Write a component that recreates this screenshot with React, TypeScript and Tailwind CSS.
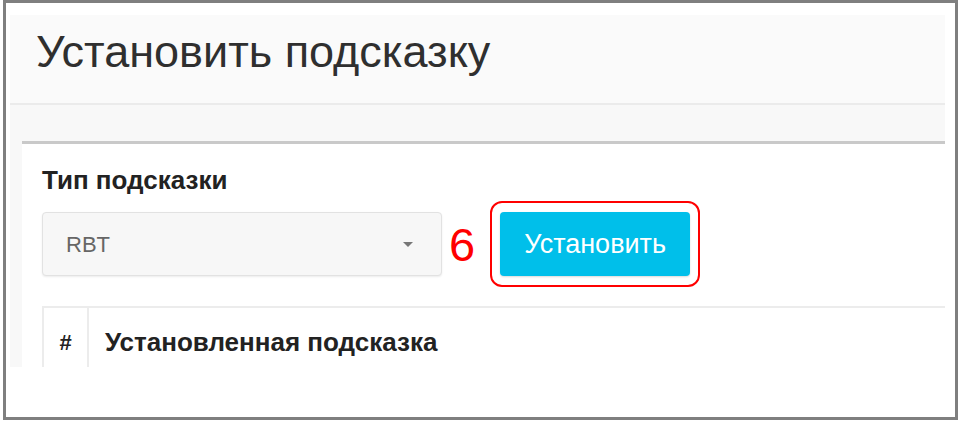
import React from "react";

export default function App() {
  return (
    <div className="w-[958px] h-[421px] bg-white font-['Liberation_Sans',Arial,sans-serif]">
      <div className="ml-[3px] w-[955px] h-[420px] border-[3px] border-[#7f7f7f] bg-white overflow-hidden">
        <div className="ml-[4px] mt-[12px] w-[935px] h-[352px] bg-[#f8f8f8] overflow-hidden flex flex-col">
          <div className="h-[90px] bg-[#fafafa] border-b-2 border-[#ebebeb] pl-[26px] pt-[11px] shrink-0">
            <h1 className="text-[45px] leading-[52px] text-[#2f2f2f]">Установить подсказку</h1>
          </div>

          <div className="pl-[12px] pt-[36px] flex-1 flex">
            <div className="flex-1 bg-white border-t-[3px] border-[#c9c9c9] pl-[20px] pt-[21px]">
              <label className="block text-[26px] leading-[30px] font-bold text-[#222]">Тип подсказки</label>

              <div className="mt-[6px] flex items-center">
                <div className="w-[400px] h-[64px] rounded-[4px] bg-[#f7f7f7] border border-[#e2e2e2] shadow-[0_1px_2px_rgba(0,0,0,0.08)] flex items-center justify-between pl-[23px] pr-[28px]">
                  <span className="text-[22px] text-[#666]">RBT</span>
                  <span className="w-0 h-0 border-l-[5px] border-r-[5px] border-t-[5px] border-l-transparent border-r-transparent border-t-[#777]" />
                </div>

                <span className="ml-[7px] text-[47px] leading-none text-[#ff0000]">6</span>

                <div className="ml-[15px] px-[8px] py-[9px] rounded-[12px] border-2 border-[#ff0000]">
                  <button className="w-[190px] h-[64px] rounded-[4px] bg-[#00bfea] text-white text-[27px] shadow-[0_1px_2px_rgba(0,0,0,0.15)]">
                    Установить
                  </button>
                </div>
              </div>

              <table className="mt-[19px] w-full border-collapse">
                <thead>
                  <tr className="border-t-2 border-[#ececec]">
                    <th className="w-[45px] h-[70px] border-l-2 border-r-2 border-[#ececec] text-[22px] font-bold text-[#222] text-center align-middle">
                      #
                    </th>
                    <th className="pl-[16px] text-left text-[26px] font-bold text-[#222] align-middle">
                      Установленная подсказка
                    </th>
                  </tr>
                </thead>
              </table>
            </div>
          </div>
        </div>
      </div>
    </div>
  );
}
